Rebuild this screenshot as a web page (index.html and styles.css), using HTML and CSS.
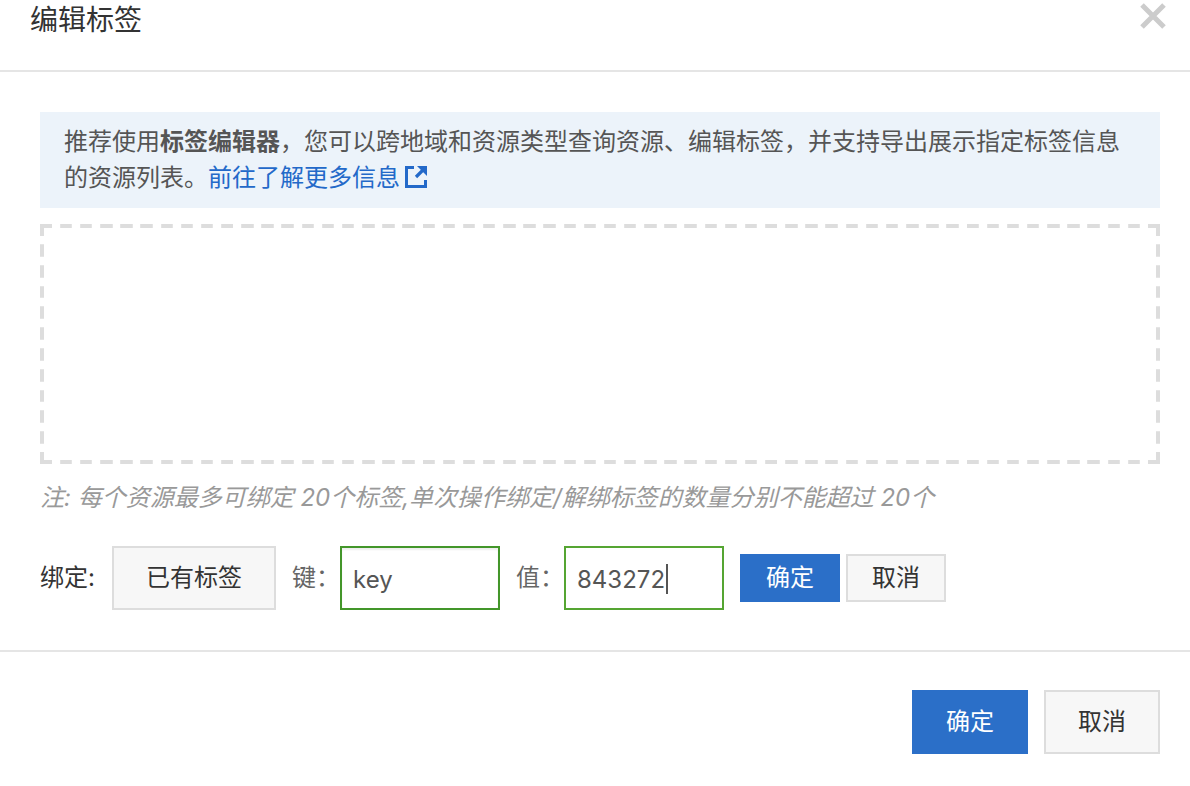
FILE: index.html
```html
<!DOCTYPE html>
<html lang="zh-CN">
<head>
    <meta charset="UTF-8">
    <meta name="viewport" content="width=device-width, initial-scale=1.0">
    <title>编辑标签</title>
    <link rel="stylesheet" href="styles.css">
</head>
<body>
    <div class="dialog">
        <header class="dialog-header">
            <h1 class="dialog-title">编辑标签</h1>
            <button type="button" class="close" aria-label="关闭">
                <svg width="26" height="26" viewBox="0 0 26 26" fill="none" stroke="#ccc" stroke-width="5">
                    <path d="M2 2L24 24M24 2L2 24"/>
                </svg>
            </button>
        </header>

        <main class="dialog-body">
            <p class="info">推荐使用<strong>标签编辑器</strong>，您可以跨地域和资源类型查询资源、编辑标签，并支持导出展示指定标签信息的资源列表。<a href="#" class="info-link">前往了解更多信息<svg class="info-icon" width="24" height="24" viewBox="0 0 24 24">
                <path d="M10 2.5H2.5V21.5H21.5V15" fill="none" stroke="currentColor" stroke-width="3"/>
                <path d="M12 12L19 5" fill="none" stroke="currentColor" stroke-width="3.2"/>
                <path d="M13 1H23V11Z" fill="currentColor"/>
            </svg></a></p>

            <div class="tag-box"></div>

            <p class="note">注: 每个资源最多可绑定 20个标签,单次操作绑定/解绑标签的数量分别不能超过 20个</p>

            <form class="bind-form">
                <span class="bind-title">绑定:</span>
                <button type="button" class="btn btn-existing">已有标签</button>
                <label for="tag_key">键：</label>
                <input type="text" id="tag_key" class="text-input" value="key">
                <label for="tag_value">值：</label>
                <div class="field">
                    <input type="text" id="tag_value" class="text-input active" value="843272">
                    <span class="caret"></span>
                </div>
                <div class="bind-actions">
                    <button type="button" class="btn btn-small btn-primary">确定</button>
                    <button type="button" class="btn btn-small">取消</button>
                </div>
            </form>
        </main>

        <footer class="dialog-footer">
            <button type="button" class="btn btn-primary">确定</button>
            <button type="button" class="btn">取消</button>
        </footer>
    </div>
</body>
</html>
```
FILE: styles.css
```css
* { box-sizing: border-box; }
body {
    margin: 0;
    background-color: #fff;
    color: #555;
    font-family: Inter, "Noto Sans CJK SC", sans-serif;
    font-size: 24px;
    line-height: 36px;
}
button, input { font: inherit; }
.dialog-header {
    display: flex;
    justify-content: space-between;
    align-items: flex-start;
    padding: 0 24px 30px 30px;
    border-bottom: 2px solid #e5e5e5;
}
.dialog-title {
    margin: 0;
    color: #333;
    font-size: 28px;
    font-weight: 400;
    line-height: 40px;
}
.close {
    display: flex;
    padding: 3px 0 0;
    border: none;
    background: none;
    cursor: pointer;
}
.dialog-body { padding: 40px 30px 40px 40px; }
.info {
    margin: 0 0 16px;
    padding: 12px 24px;
    background-color: #ecf3fa;
}
.info-link {
    color: #2369c9;
    text-decoration: none;
}
.info-icon {
    margin-left: 4px;
    vertical-align: -3px;
}
/* 12px dashes with 8px gaps, the browser's own dashes are too short */
.tag-box {
    height: 240px;
    border: 4px dashed #ddd;
    border-image: url("data:image/svg+xml,%3Csvg xmlns='http://www.w3.org/2000/svg' width='52' height='52'%3E%3Cpath fill='%23ddd' d='M0 0h12v4H4v8H0zM40 0h12v12h-4V4h-8zM0 40h4v8h8v4H0zM48 40h4v12H40v-4h8zM20 0h12v4H20zM20 48h12v4H20zM0 20h4v12H0zM48 20h4v12h-4z'/%3E%3C/svg%3E") 16 / 16px round;
}
.note {
    margin: 16px 0 30px;
    color: #999;
    font-style: italic;
}
.bind-form {
    display: flex;
    align-items: center;
}
.bind-title {
    width: 72px;
    color: #333;
}
.bind-form label { color: #666; }
.btn {
    height: 64px;
    padding: 0 32px;
    border: 2px solid #ddd;
    background-color: #f7f7f7;
    color: #333;
    line-height: 36px;
    cursor: pointer;
}
.btn-existing { margin-right: 16px; }
.btn-small {
    height: 48px;
    padding: 0 24px;
}
.btn-primary {
    border-color: #2b6fc8;
    background-color: #2b6fc8;
    color: #fff;
}
.text-input {
    display: block;
    width: 160px;
    height: 64px;
    margin-right: 16px;
    padding: 2px 11px 0;
    border: 2px solid #43962a;
    border-radius: 0;
    background-color: #fff;
    box-shadow: inset 0 2px 2px rgba(0, 0, 0, 0.07);
    color: #555;
    outline: none;
}
.text-input.active {
    border-color: #55a532;
    box-shadow: none;
}
.field { position: relative; }
.caret {
    position: absolute;
    top: 18px;
    left: 102px;
    width: 2px;
    height: 30px;
    background-color: #555;
}
.bind-actions {
    display: flex;
    gap: 6px;
}
.dialog-footer {
    display: flex;
    justify-content: flex-end;
    gap: 16px;
    padding: 38px 30px 32px;
    border-top: 2px solid #e5e5e5;
}
```
